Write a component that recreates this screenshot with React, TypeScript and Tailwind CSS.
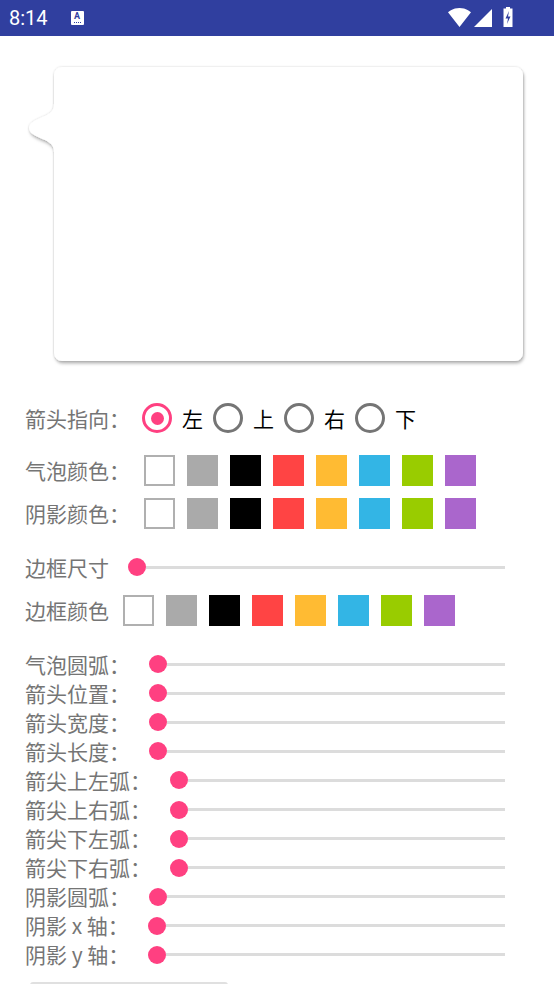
import React from "react";

const CJK = "font-['Noto_Sans_CJK_SC',sans-serif]";

const swatches = ["#ffffff", "#aaaaaa", "#000000", "#ff4444", "#ffbb33", "#33b5e5", "#99cc00", "#aa66cc"];

function Swatches() {
  return (
    <div className="flex gap-[12px] ml-[14px]">
      {swatches.map((c, i) =>
        i === 0 ? (
          <div key={i} className="w-[31px] h-[31px] border-2 border-[#b0b0b0] bg-white" />
        ) : (
          <div key={i} className="w-[31px] h-[31px]" style={{ backgroundColor: c }} />
        )
      )}
    </div>
  );
}

function Radio({ checked, label }: { checked?: boolean; label: string }) {
  return (
    <div className="flex items-center">
      {checked ? (
        <div className="w-[30px] h-[30px] rounded-full border-[3px] border-[#ff4081] flex items-center justify-center">
          <div className="w-[13px] h-[13px] rounded-full bg-[#ff4081]" />
        </div>
      ) : (
        <div className="w-[30px] h-[30px] rounded-full border-[3px] border-[#757575]" />
      )}
      <span className={`${CJK} ml-[10px] mr-[10px] text-[21px] leading-none text-black`}>{label}</span>
    </div>
  );
}

function Slider() {
  return (
    <div className="flex-1 flex items-center ml-[19px] mr-[49px]">
      <div className="w-[18px] h-[18px] rounded-full bg-[#ff4081] shrink-0" />
      <div className="flex-1 h-[3px] bg-[#dcdcdc]" />
    </div>
  );
}

const sliderRows = [
  "气泡圆弧：",
  "箭头位置：",
  "箭头宽度：",
  "箭头长度：",
  "箭尖上左弧：",
  "箭尖上右弧：",
  "箭尖下左弧：",
  "箭尖下右弧：",
  "阴影圆弧：",
  "阴影 x 轴：",
  "阴影 y 轴：",
];

export default function App() {
  return (
    <div className="w-[554px] h-[984px] overflow-hidden bg-white flex flex-col">
      {/* status bar */}
      <div className="h-[36px] bg-[#303f9f] flex items-center shrink-0 relative">
        <span className="ml-[9px] text-white text-[20px] font-['Roboto',sans-serif] leading-none">8:14</span>
        <div className="ml-[23px] w-[13px] h-[14px] bg-white rounded-[1px] flex flex-col items-center justify-start">
          <span className="text-[#303f9f] text-[9px] font-bold font-['Roboto',sans-serif] leading-[10px]">A</span>
          <div className="w-[7px] h-[1px] mt-[1px] border-t border-dotted border-[#303f9f]" />
        </div>
        <div className="flex-1" />
        <svg width="70" height="36" viewBox="448 0 70 36" className="mr-[36px]">
          <path d="M459.5,27 L471,12.3 C470.5,11.9 466.1,8 459.5,8 C452.9,8 448.5,11.9 448,12.3 Z" fill="#fff" />
          <path d="M492,9 L492,27 L474,27 Z" fill="#fff" />
          <path d="M506,7 H510 V8.5 H512.5 V27 H503.5 V8.5 H506 Z" fill="#fff" />
          <path d="M509,11 L505.5,18.5 H508 L507,24 L510.5,16.5 H508 Z" fill="#303f9f" />
        </svg>
      </div>

      {/* bubble */}
      <svg width="554" height="340" viewBox="0 36 554 340" className="shrink-0 block">
        <defs>
          <filter id="sh" x="-10%" y="-10%" width="125%" height="130%">
            <feDropShadow dx="0" dy="0" stdDeviation="0.8" floodColor="#000" floodOpacity="0.16" />
            <feDropShadow dx="1" dy="2.5" stdDeviation="1.8" floodColor="#000" floodOpacity="0.28" />
          </filter>
        </defs>
        <path
          filter="url(#sh)"
          fill="#ffffff"
          d="M62,67 H515 A8 8 0 0 1 523,75 V353 A8 8 0 0 1 515,361 H62 A8 8 0 0 1 54,353 V152 C54,144 48,141 40,138 C33,135 29,132 29,128 C29,124 33,121 40,118 C48,115 54,112 54,104 V75 A8 8 0 0 1 62,67 Z"
        />
      </svg>

      {/* arrow direction */}
      <div className="mt-[27px] h-[30px] flex items-center pl-[25px] shrink-0">
        <span className={`${CJK} text-[21px] leading-none text-[#757575]`}>箭头指向：</span>
        <div className="flex items-center ml-[12px]">
          <Radio checked label="左" />
          <Radio label="上" />
          <Radio label="右" />
          <Radio label="下" />
        </div>
      </div>

      {/* bubble colour */}
      <div className="mt-[22px] h-[31px] flex items-center pl-[25px] shrink-0">
        <span className={`${CJK} text-[21px] leading-none text-[#757575]`}>气泡颜色：</span>
        <Swatches />
      </div>
      <div className="mt-[12px] h-[31px] flex items-center pl-[25px] shrink-0">
        <span className={`${CJK} text-[21px] leading-none text-[#757575]`}>阴影颜色：</span>
        <Swatches />
      </div>

      {/* border size */}
      <div className="mt-[23px] h-[30px] flex items-center pl-[25px] shrink-0">
        <span className={`${CJK} text-[21px] leading-none text-[#757575]`}>边框尺寸</span>
        <Slider />
      </div>
      <div className="mt-[13px] h-[31px] flex items-center pl-[25px] shrink-0">
        <span className={`${CJK} text-[21px] leading-none text-[#757575]`}>边框颜色</span>
        <Swatches />
      </div>

      {/* sliders */}
      <div className="mt-[23.5px] flex flex-col shrink-0">
        {sliderRows.map((l) => (
          <div key={l} className="h-[29.1px] flex items-center pl-[25px]">
            <span className={`${CJK} text-[21px] leading-none text-[#757575] whitespace-pre`}>{l}</span>
            <Slider />
          </div>
        ))}
      </div>

      <div className="mt-[12.5px] ml-[30px] w-[198px] h-[20px] rounded-t-[3px] bg-[#e0e0e0] shrink-0" />
    </div>
  );
}
